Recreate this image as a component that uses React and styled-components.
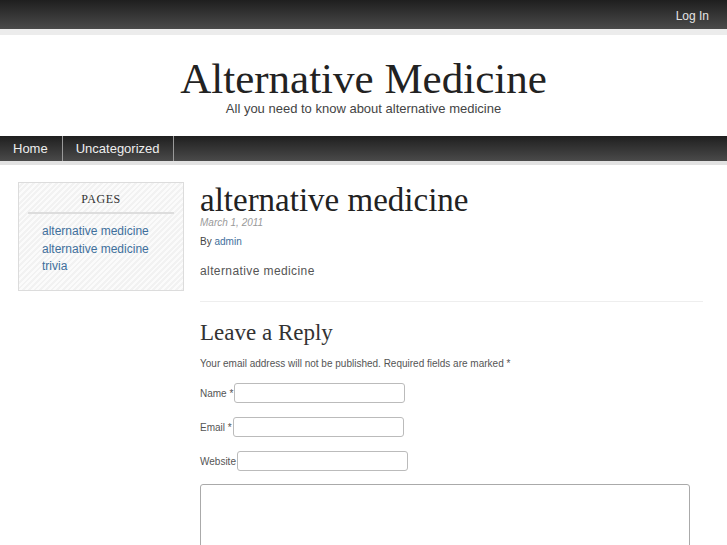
import React from "react"
import styled, { createGlobalStyle } from "styled-components"

const GlobalStyle = createGlobalStyle`
  html, body {
    margin: 0;
    padding: 0;
    background: #fff;
    font-family: "Liberation Sans", Arial, sans-serif;
    overflow: hidden;
  }
`

const TopBar = styled.div`
  height: 29px;
  background: linear-gradient(#1f1f1f, #4a4a4a);
  border-bottom: 6px solid #ececec;
  display: flex;
  justify-content: flex-end;
  align-items: center;
  padding: 0 18px;
`

const TopLink = styled.a`
  color: #e4e4e4;
  font-size: 12px;
  text-decoration: none;
  margin-top: 2px;
`

const Header = styled.header`
  text-align: center;
  padding: 19px 0 0;
  height: 82px;
`

const SiteTitle = styled.h1`
  margin: 0;
  font-family: "Liberation Serif", "Times New Roman", serif;
  font-weight: normal;
  font-size: 43px;
  line-height: 50px;
  color: #222;
`

const Tagline = styled.div`
  font-size: 13px;
  color: #444;
  margin-top: -3px;
`

const NavBar = styled.nav`
  height: 25px;
  background: linear-gradient(#1f1f1f, #4a4a4a);
  border-bottom: 4px solid #e2e2e2;
  display: flex;
`

const NavItem = styled.a`
  color: #eee;
  font-size: 13px;
  text-decoration: none;
  display: flex;
  align-items: center;
  padding: 0 ${p => (p.$first ? 14 : 13)}px 0 13px;
  border-right: 1px solid #9a9a9a;
`

const Body = styled.div`
  display: flex;
  gap: 16px;
  padding: 17px 0 0 18px;
`

const Sidebar = styled.aside`
  width: 166px;
  height: 109px;
  border: 1px solid #dcdcdc;
  background: repeating-linear-gradient(
    -45deg,
    #f2f2f2 0px,
    #f2f2f2 2px,
    #fbfbfb 2px,
    #fbfbfb 4px
  );
  padding: 9px 9px 0;
  box-sizing: border-box;
`

const WidgetTitle = styled.h3`
  margin: 0;
  font-family: "Liberation Serif", "Times New Roman", serif;
  font-weight: normal;
  font-size: 12px;
  letter-spacing: 0.5px;
  color: #333;
  text-align: center;
  padding-bottom: 5px;
  border-bottom: 2px solid #ddd;
`

const PageList = styled.ul`
  list-style: none;
  margin: 0;
  padding: 9px 0 0 14px;
`

const PageLink = styled.li`
  font-size: 12px;
  line-height: 17.5px;
  color: #3e6f9c;
`

const Main = styled.main`
  width: 503px;
`

const PostTitle = styled.h2`
  margin: 0;
  font-family: "Liberation Serif", "Times New Roman", serif;
  font-weight: normal;
  font-size: 33px;
  line-height: 36px;
  color: #222;
`

const PostDate = styled.div`
  font-size: 10px;
  font-style: italic;
  color: #999;
  margin-top: -1px;
`

const Byline = styled.div`
  font-size: 10px;
  color: #444;
  margin-top: 8px;
`

const Link = styled.span`
  color: #3e6f9c;
`

const PostText = styled.p`
  font-size: 12px;
  color: #555;
  letter-spacing: 0.4px;
  margin: 17px 0 0;
  padding-bottom: 23px;
  border-bottom: 1px solid #eee;
`

const ReplyTitle = styled.h3`
  margin: 17px 0 0;
  font-family: "Liberation Serif", "Times New Roman", serif;
  font-weight: normal;
  font-size: 23px;
  line-height: 28px;
  color: #333;
`

const Note = styled.p`
  font-size: 10px;
  color: #555;
  margin: 11px 0 0;
`

const FieldRow = styled.div`
  display: flex;
  align-items: center;
  gap: 1px;
  margin-top: ${p => p.$top}px;
  font-size: 10px;
  color: #555;
`

const Input = styled.div`
  width: 171px;
  height: 20px;
  box-sizing: border-box;
  border: 1px solid #bbb;
  border-radius: 3px;
  background: #fff;
`

const TextArea = styled.div`
  width: 490px;
  height: 80px;
  box-sizing: border-box;
  border: 1px solid #aaa;
  border-radius: 3px;
  margin-top: 13px;
`

export default function App() {
  return (
    <>
      <GlobalStyle />
      <TopBar>
        <TopLink>Log In</TopLink>
      </TopBar>
      <Header>
        <SiteTitle>Alternative Medicine</SiteTitle>
        <Tagline>All you need to know about alternative medicine</Tagline>
      </Header>
      <NavBar>
        <NavItem $first>Home</NavItem>
        <NavItem>Uncategorized</NavItem>
      </NavBar>
      <Body>
        <Sidebar>
          <WidgetTitle>PAGES</WidgetTitle>
          <PageList>
            <PageLink>alternative medicine</PageLink>
            <PageLink>alternative medicine trivia</PageLink>
          </PageList>
        </Sidebar>
        <Main>
          <PostTitle>alternative medicine</PostTitle>
          <PostDate>March 1, 2011</PostDate>
          <Byline>
            By <Link>admin</Link>
          </Byline>
          <PostText>alternative medicine</PostText>
          <ReplyTitle>Leave a Reply</ReplyTitle>
          <Note>Your email address will not be published. Required fields are marked *</Note>
          <FieldRow $top={14}>
            Name *<Input />
          </FieldRow>
          <FieldRow $top={14}>
            Email *<Input />
          </FieldRow>
          <FieldRow $top={14}>
            Website<Input />
          </FieldRow>
          <TextArea />
        </Main>
      </Body>
    </>
  )
}
